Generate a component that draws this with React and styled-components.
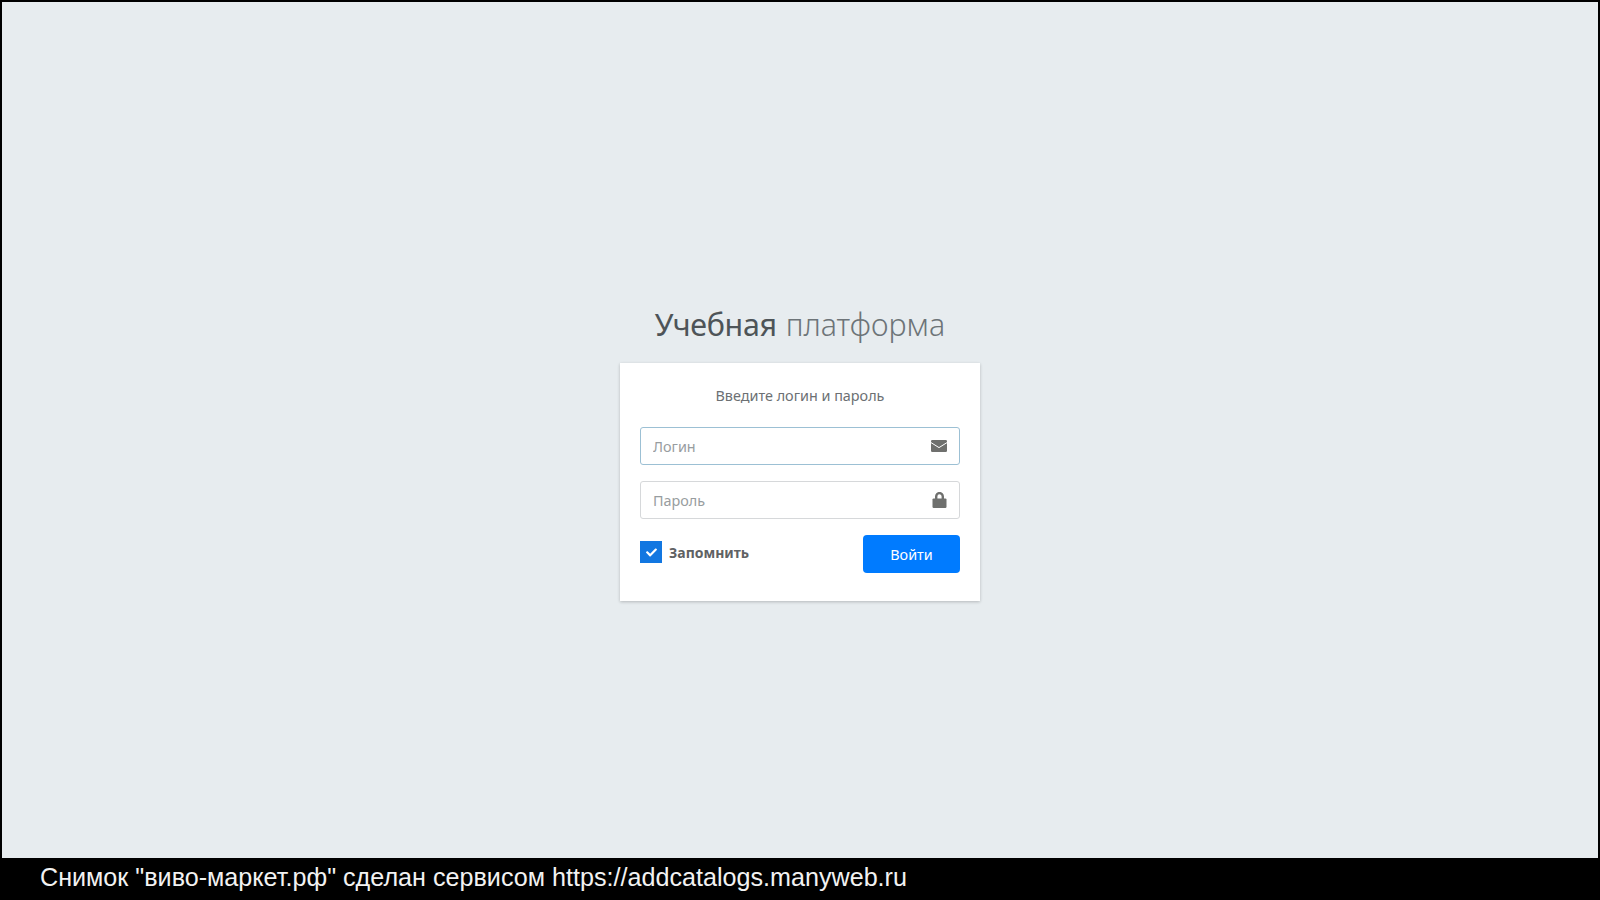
import React, { useState } from "react";
import styled, { createGlobalStyle } from "styled-components";
import { FaCheck } from "react-icons/fa";

const GlobalStyle = createGlobalStyle`
  html, body {
    margin: 0;
    padding: 0;
    height: 100%;
    background: #000;
  }
  * {
    box-sizing: border-box;
  }
`;

const Page = styled.div`
  display: flex;
  flex-direction: column;
  width: 100%;
  height: 100vh;
  overflow: hidden;
  font-family: "Noto Sans", "Open Sans", sans-serif;
`;

const Stage = styled.main`
  flex: 1;
  display: flex;
  flex-direction: column;
  align-items: center;
  margin: 2px 2px 0;
  padding-top: 300px;
  background: #e7ecef;
`;

const Title = styled.h1`
  margin: 0 0 16px;
  font-size: 30.4px;
  line-height: 45px;
  font-weight: 300;
  color: #6d7478;

  b {
    font-weight: 400;
    color: #4e5458;
    letter-spacing: -0.3px;
    margin-right: 1px;
  }
`;

const Card = styled.form`
  display: flex;
  flex-direction: column;
  width: 360px;
  height: 238px;
  padding: 20px;
  background: #fff;
  box-shadow: 0 1px 3px rgba(0, 0, 0, 0.22);
`;

const Hint = styled.p`
  margin: 0 0 20px;
  height: 24px;
  text-align: center;
  font-size: 14.4px;
  line-height: 25px;
  color: #6c7073;
`;

const Field = styled.label`
  display: flex;
  align-items: center;
  height: 38px;
  margin-bottom: 16px;
  padding: 0 12px;
  background: #fff;
  border: 1px solid ${(p) => (p.$focused ? "#9cc0d4" : "#d6d8da")};
  border-radius: 3px;
  color: #6f706e;
`;

const Input = styled.input`
  flex: 1;
  min-width: 0;
  border: 0;
  padding: 0;
  outline: none;
  background: transparent;
  font-family: inherit;
  font-size: 14.4px;
  color: #495057;

  &::placeholder {
    color: #989da0;
    opacity: 1;
  }
`;

const Footer = styled.div`
  display: flex;
  justify-content: space-between;
  align-items: flex-start;
`;

const Remember = styled.label`
  display: flex;
  align-items: center;
  gap: 7px;
  margin-top: 6px;
  font-size: 14px;
  font-weight: 700;
  color: #5f6264;
  cursor: pointer;
`;

const CheckBox = styled.span`
  display: flex;
  align-items: center;
  justify-content: center;
  width: 22px;
  height: 22px;
  background: #1277e1;
  color: #fff;
  font-size: 11px;
`;

const Submit = styled.button`
  width: 97px;
  height: 38px;
  border: 0;
  border-radius: 4px;
  background: #007bff;
  color: #fff;
  font-family: inherit;
  font-size: 14.4px;
  cursor: pointer;
`;

const CaptureBar = styled.footer`
  flex: none;
  height: 42px;
  padding-left: 40px;
  background: #000;
  color: #f2f2f2;
  font-family: "Liberation Sans", Arial, sans-serif;
  font-size: 25.15px;
  line-height: 38px;
  white-space: nowrap;
`;

const MailIcon = () => (
  <svg width="16" height="12" viewBox="0 0 16 12">
    <rect width="16" height="12" rx="1.2" fill="currentColor" />
    <path d="M0 2.6 L8 7.6 L16 2.6" fill="none" stroke="#fff" strokeWidth="1" />
  </svg>
);

const LockIcon = () => (
  <svg width="15" height="16" viewBox="0 0 15 16">
    <path d="M4.2 7V4.4a3.3 3.3 0 0 1 6.6 0V7" fill="none" stroke="currentColor" strokeWidth="2.4" />
    <rect x="0.5" y="6.4" width="14" height="9.6" rx="1.2" fill="currentColor" />
  </svg>
);

export default function App() {
  const [remember, setRemember] = useState(true);

  return (
    <Page>
      <GlobalStyle />
      <Stage>
        <Title>
          <b>Учебная</b> платформа
        </Title>
        <Card onSubmit={(event) => event.preventDefault()}>
          <Hint>Введите логин и пароль</Hint>
          <Field $focused>
            <Input type="text" placeholder="Логин" />
            <MailIcon />
          </Field>
          <Field>
            <Input type="password" placeholder="Пароль" />
            <LockIcon />
          </Field>
          <Footer>
            <Remember onClick={() => setRemember(!remember)}>
              <CheckBox>{remember && <FaCheck />}</CheckBox>
              Запомнить
            </Remember>
            <Submit type="submit">Войти</Submit>
          </Footer>
        </Card>
      </Stage>
      <CaptureBar>Снимок "виво-маркет.рф" сделан сервисом https://addcatalogs.manyweb.ru</CaptureBar>
    </Page>
  );
}
